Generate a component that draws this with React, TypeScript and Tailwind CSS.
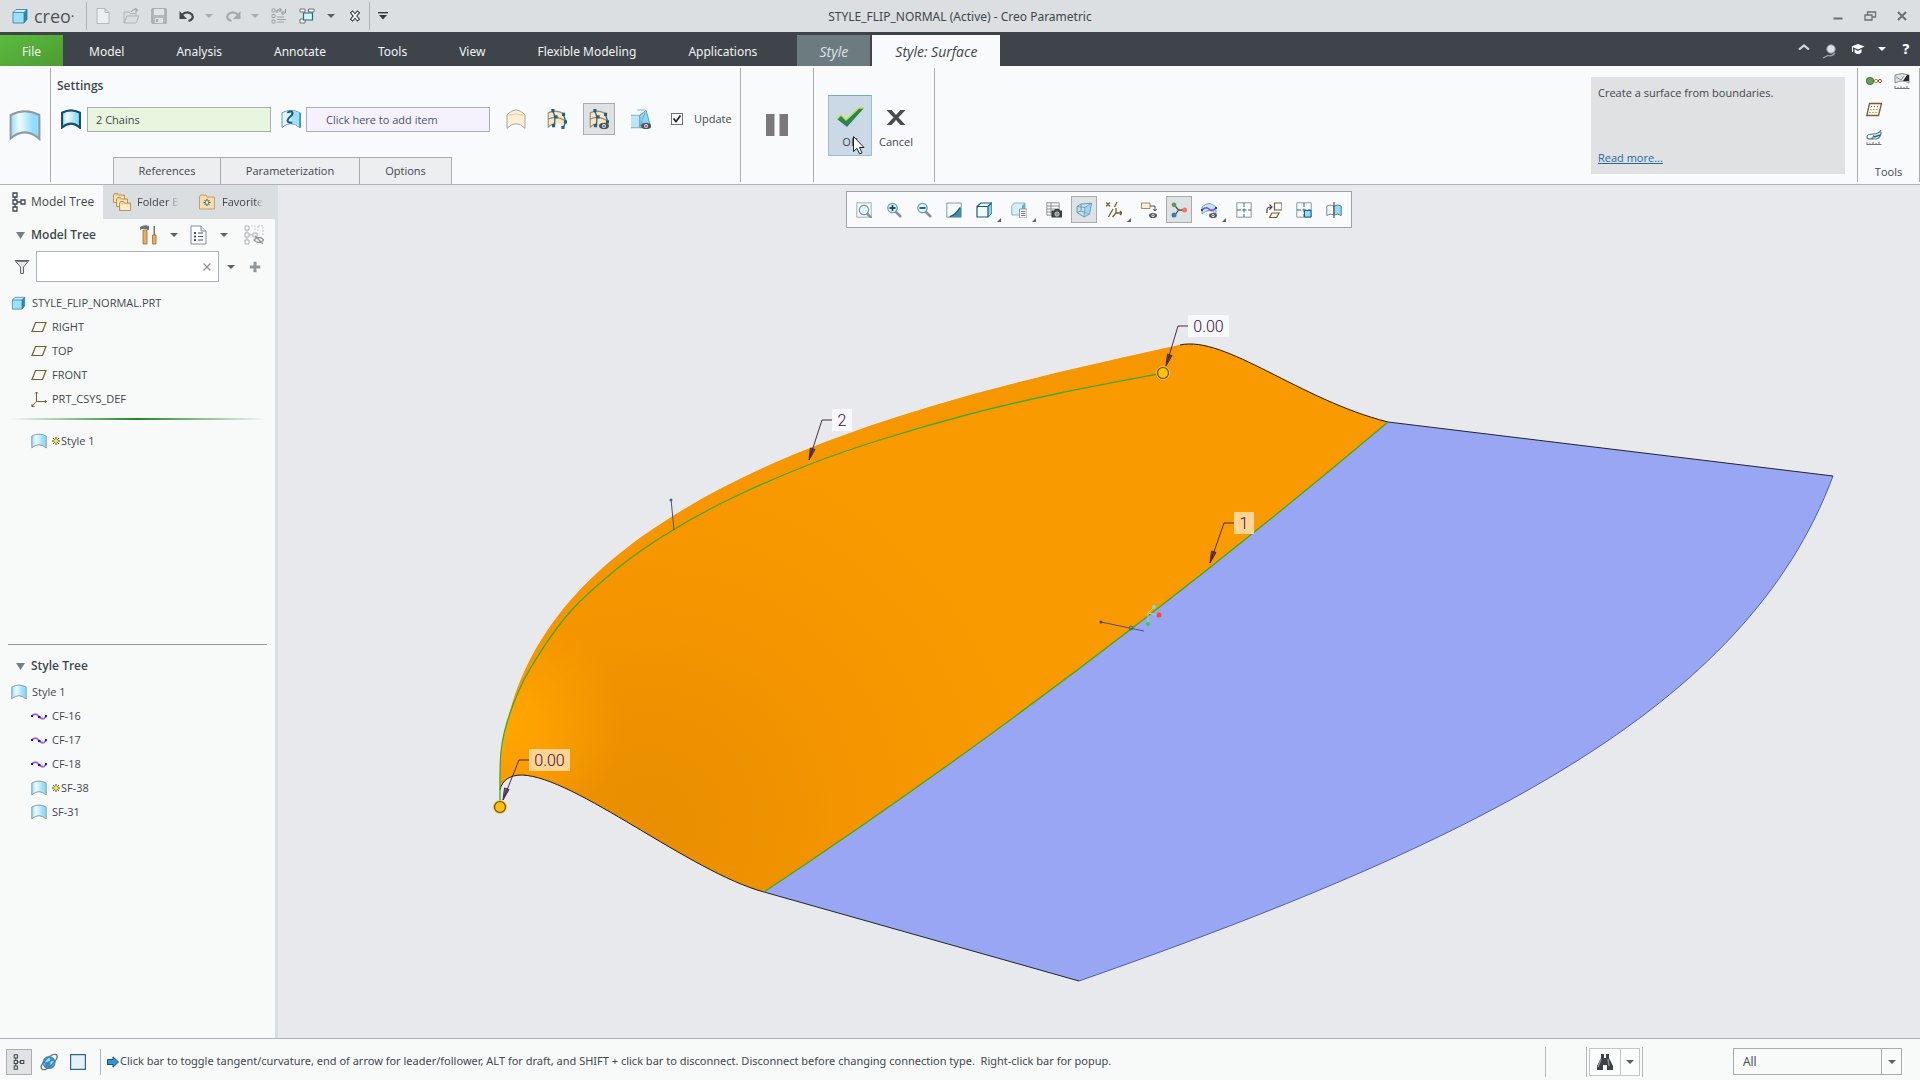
import React from "react";
import clsx from "clsx";

type IconProps = { className?: string };
type Point = [number, number];

const Svg: React.FC<{ box?: string; className?: string; children: React.ReactNode }> = ({
  box = "0 0 16 16",
  className,
  children,
}) => (
  <svg viewBox={box} fill="none" aria-hidden="true" className={clsx("shrink-0", className)}>
    {children}
  </svg>
);

const Caret: React.FC<IconProps> = ({ className = "text-[#5b6063]" }) => (
  <Svg box="0 0 8 4" className={clsx("h-1 w-2", className)}>
    <path d="M0 0h8L4 4z" fill="currentColor" />
  </Svg>
);

const CubeIcon: React.FC<IconProps> = ({ className }) => (
  <Svg className={className}>
    <path d="M1 4.5 4 1.5h11v10L12 15H1z" fill="#c8efff" />
    <path d="M1 4.5h11V15H1z" fill="#9be1ff" />
    <path d="M12 4.5l3-3v10L12 15z" fill="#2f86b5" />
    <path d="M1 4.5 4 1.5h11v10L12 15H1zM1 4.5h11V15M12 4.5l3-3" stroke="#33789d" strokeWidth=".8" />
  </Svg>
);

const SurfaceIcon: React.FC<IconProps & { stroke?: string; tint?: string; weight?: number }> = ({
  className,
  stroke = "#8d9aa2",
  tint = "#8fdcfc",
  weight = 1,
}) => {
  const id = React.useId();
  return (
    <Svg className={className}>
      <defs>
        <linearGradient id={id}>
          <stop offset="0" stopColor={tint} />
          <stop offset=".3" stopColor="#f0fbff" />
          <stop offset=".8" stopColor={tint} />
        </linearGradient>
      </defs>
      <path
        d="M.8 3Q8-.8 15.2 3v12Q8 8.5.8 14.8z"
        fill={`url(#${id})`}
        stroke={stroke}
        strokeWidth={weight}
      />
    </Svg>
  );
};

const CurveRefIcon: React.FC<IconProps> = ({ className }) => (
  <Svg className={className}>
    <path d="M.8 3Q8-.8 15.2 3v12Q8 8.5.8 14.8z" fill="#e3f6fd" stroke="#6b98ae" strokeWidth=".8" />
    <path d="M9 1.5l6.2 1.5v11.5Q12 12 8 11.5z" fill="#9be1ff" />
    <path d="M5 3c5-3 5 1 2.5 3s-4 5 1.500 5" stroke="#125a82" strokeWidth="1.6" />
    <path d="M15.2 3v12" stroke="#23708f" />
  </Svg>
);

const TanIcon: React.FC<IconProps> = ({ className }) => (
  <Svg className={className}>
    <path d="M.8 4.5Q8-3 15.2 4.500V15.500Q8 8 .8 15.500z" fill="#ffeed3" stroke="#a9a6a2" strokeWidth=".8" />
    <path d="M1 5q7-2 14 0" stroke="#d8c5a7" strokeWidth=".6" />
  </Svg>
);

const Eye = () => (
  <>
    <ellipse cx="12" cy="13.5" rx="4" ry="2.6" fill="#4e5357" />
    <circle cx="12" cy="13.5" r="1.5" fill="#fff" />
    <circle cx="12" cy="13.5" r=".8" fill="#4e5357" />
  </>
);

const BlendIcon: React.FC<IconProps & { eye?: boolean }> = ({ className, eye }) => (
  <Svg className={className}>
    <path d="M1 3Q7 0 14 4v10q-6-5-13 0z" fill="#ffe5bd" />
    <path d="M1 3v12M1 3Q7 0 14 4M1 8q6-3 13 1M1 14.5q3-3 6-2.500" stroke="#918c84" strokeWidth=".9" />
    <path d="M4.5 1.5q3 5 1 12M13 4l2 6-2 5" stroke="#17648c" strokeWidth="1" />
    <path
      d="M3.5 0h2.500v2.500H3.500zM6 5h2.500v2.500H6zM4 12h2.500v2.500H4zM12 3h2.500v2.500H12zM13.500 9H16v2.500h-2.500zM11.500 13.500H14V16h-2.500z"
      fill="#17648c"
    />
    {eye && <Eye />}
  </Svg>
);

const PreviewIcon: React.FC<IconProps> = ({ className }) => (
  <Svg className={className}>
    <path d="M0 5h7v10H0z" fill="#bfe3f4" />
    <path d="M7 5l5-4 4 14H7z" fill="#8fd4f3" stroke="#4e9fc4" strokeWidth=".7" />
    <path d="M0 5h7v10H0M5 .8h6M7 15l4-12" stroke="#6fa7c3" strokeWidth=".7" />
    <Eye />
  </Svg>
);

const TreeIcon: React.FC<IconProps> = ({ className }) => (
  <Svg box="0 0 14 20" className={className}>
    <path
      d="M1 1h4v4H1zM1 8h4v4H1zM1 15h4v4H1zM9 8h4v4H9zM3 5v3M3 12v3M5 10h4"
      stroke="currentColor"
      strokeWidth="1.3"
    />
  </Svg>
);

const FolderShape: React.FC<{ x: number; y: number }> = ({ x, y }) => (
  <g transform={`translate(${x} ${y})`}>
    <path d="M.5 2V9.500h11V2H5.500L4.500.5h-3z" fill="#f9cf8c" stroke="#a8834a" strokeWidth=".8" />
    <path d="M1.500 3.500h9.500v5.500H1.500z" fill="#ffeccb" />
  </g>
);

const FoldersIcon: React.FC<IconProps> = ({ className }) => (
  <Svg box="0 0 18 18" className={className}>
    <FolderShape x={0} y={0} />
    <FolderShape x={3} y={4} />
    <FolderShape x={6} y={8} />
  </Svg>
);

const FavoritesIcon: React.FC<IconProps> = ({ className }) => (
  <Svg className={className}>
    <path d="M.5 3v12h15V3H8L7 1H1.500z" fill="#fbdca8" stroke="#b39361" strokeWidth=".8" />
    <path d="M8 5v7M4.500 8.500h7M5.500 6l5 5M10.500 6l-5 5" stroke="#175a77" strokeWidth="1" />
    <circle cx="8" cy="8.5" r="1.2" fill="#fff" />
  </Svg>
);

const ToolsIcon: React.FC<IconProps> = ({ className }) => (
  <Svg box="0 0 17 20" className={className}>
    <path d="M0 2q4-3 9-1v4H7V4H2L0 5z" fill="#69747a" />
    <path d="M3 5h4v14H3z" fill="#e9ae62" stroke="#8d5c25" strokeWidth=".7" />
    <path d="M13.500 1h1.500v9h-1.500z" fill="#6c777d" />
    <path d="M12.500 10H16v9h-3.500z" fill="#e9ae62" stroke="#8d5c25" strokeWidth=".7" />
  </Svg>
);

const PageListIcon: React.FC<IconProps> = ({ className }) => (
  <Svg box="0 0 17 20" className={className}>
    <path d="M1 1h10l5 5v13H1z" fill="#fbfcfd" stroke="#82909a" />
    <path d="M11 1v5h5" fill="#dfe5e9" stroke="#82909a" />
    <path d="M4 8h2M4 11.500h2M4 15h2" stroke="#4b545a" strokeWidth="2" />
    <path d="M8 8h5M8 11.500h5M8 15h5" stroke="#4b545a" />
  </Svg>
);

const HiddenTreeIcon: React.FC<IconProps> = ({ className }) => (
  <Svg box="0 0 20 20" className={className}>
    <path d="M1 1h4v4H1zM1 8h4v4H1zM1 15h4v4H1zM9 8h4v4H9zM3 5v3M3 12v3M5 10h4" stroke="#aeb3b6" />
    <path d="M7 1h4v5M14 1h5v10M14 1v6" stroke="#c9cdcf" strokeDasharray="2 1" />
    <path d="M10 15q5-5 10 0-5 5-10 0zM11 11l8 8" stroke="#8f9598" strokeWidth="1.2" />
  </Svg>
);

const FunnelIcon: React.FC<IconProps> = ({ className }) => (
  <Svg className={className}>
    <path d="M1 1.500h14L9.500 8v6.500H6.500V8z" fill="#e3e5e6" stroke="#62676a" />
    <path d="M2.500 2.200h11" stroke="#4b5053" />
  </Svg>
);

const DatumIcon: React.FC<IconProps> = ({ className }) => (
  <Svg className={className}>
    <path d="M4.500 3.500H15L11.500 12.500H1z" stroke="#7b5d2c" strokeWidth="1.2" />
  </Svg>
);

const CsysIcon: React.FC<IconProps> = ({ className }) => (
  <Svg className={className}>
    <path
      d="M5.500 1v9.500H15.500M5.500 10.500L.8 15.500M4 2.500L5.500 1 7 2.500M14 9l1.500 1.500L14 12M1 13v2.500h2.500"
      stroke="#7b5d2c"
    />
  </Svg>
);

const CurveIcon: React.FC<IconProps> = ({ className }) => (
  <Svg className={className}>
    <path d="M1 8q3.500-4 7 .5t7 0" stroke="#a95bc9" strokeWidth="1.8" />
    <path d="M0 7h2v2H0zM7 8h2.500v2H7zM14 7h2v2h-2z" fill="#1a14c8" />
  </Svg>
);

const StarIcon: React.FC<IconProps> = ({ className }) => (
  <Svg box="0 0 8 8" className={className}>
    <path d="M4 0v8M0 4h8M1 1l6 6M7 1L1 7" stroke="#3d3912" strokeWidth="1" />
    <circle cx="4" cy="4" r="2" fill="#ffe92a" />
  </Svg>
);

const Magnifier: React.FC<{ sign?: string }> = ({ sign }) => (
  <>
    <path d="M9.500 9.500l5.500 5.500" stroke="#8d8f91" strokeWidth="2.5" />
    <circle cx="6.5" cy="6" r="4.7" fill="#e6f5fb" stroke="#6398b0" strokeWidth="1.2" />
    {sign && <path d={sign} stroke="#0f5579" strokeWidth="1.8" />}
  </>
);

const Grid4: React.FC<{ filled?: boolean }> = ({ filled }) => (
  <>
    <path d="M.8.8h14.400v14.400H.8z" fill="#fbfdfe" stroke="#8c969c" />
    <path d="M8 1v14M1 8h14" stroke="#1c7099" strokeDasharray="4 1.5" />
    {filled && <path d="M8.500 8.500h6.500v6.500H8.500z" fill="#8fdcfc" stroke="#1c6085" />}
  </>
);

type Tool = { name: string; active?: boolean; more?: boolean; art: React.ReactNode };

const viewTools: Tool[] = [
  {
    name: "Refit",
    art: (
      <>
        <path d="M.8.8h14.400v14.400H.8z" stroke="#a6adb1" />
        <g transform="translate(1.5 2)">
          <Magnifier />
        </g>
      </>
    ),
  },
  { name: "Zoom In", art: <Magnifier sign="M3.500 6h6M6.500 3v6" /> },
  { name: "Zoom Out", art: <Magnifier sign="M3.500 6h6" /> },
  {
    name: "Repaint",
    art: (
      <>
        <path d="M.8 1h14.400v14.200H.8z" fill="#f7fbfd" stroke="#8c979d" />
        <path d="M2 15q7-2 13-10v10z" fill="#3f8db4" />
        <path d="M4 14.500q6-2 10-9" stroke="#14567a" strokeWidth="1.3" />
      </>
    ),
  },
  {
    name: "Display Style",
    more: true,
    art: (
      <>
        <path d="M1 4.500 5 1h10.500v10L12 15H1z" fill="#f3fafd" stroke="#155a80" strokeWidth="1.2" />
        <path d="M12 4.500L15.500 1v10L12 15z" fill="#8bd2f2" />
        <path d="M1 4.500h11V15M12 4.500L15.500 1" stroke="#155a80" strokeWidth="1.2" />
      </>
    ),
  },
  {
    name: "Saved Orientations",
    more: true,
    art: (
      <>
        <path d="M.8 3.500L3.500 1H14v9l-3 3H.8z" fill="#d3f0fc" stroke="#8fb4c5" />
        <path d="M11 3.500L14 1v6h-3z" fill="#5eb2da" />
        <path d="M8.500 7H16v9H8.500z" fill="#fafafa" stroke="#7e878c" strokeWidth=".8" />
        <path d="M10 9.500h4.500M10 11.500h4.500M10 13.500h4.500" stroke="#545d62" strokeWidth=".8" />
      </>
    ),
  },
  {
    name: "View Manager",
    art: (
      <>
        <path d="M.8.8h12.400v12.400H.8zM5 1v12M1 4h12M1 7h12M1 10h12" stroke="#81898d" strokeWidth=".9" />
        <path d="M5.500 8.500h2.500l1-1.500h4l1 1.500h2v7H5.500z" fill="#3b4043" />
        <circle cx="11" cy="12" r="2.2" fill="#888f93" stroke="#e2e4e5" strokeWidth=".7" />
      </>
    ),
  },
  {
    name: "Perspective View",
    active: true,
    art: (
      <>
        <path d="M1 4.500L5 2l10.500-.8-2 11L8 15 1 10.500z" fill="#c3dfec" stroke="#4b8aab" strokeWidth=".8" />
        <path d="M1 4.500l8 1L15.500 1.200M9 5.500L8 15M5 2v7l8.500 3M1 10.500L5 9" stroke="#5893b1" strokeWidth=".8" />
        <path d="M9 5.500L15.500 1.200l-2 11L8 15z" fill="#8cc6e0" opacity=".5" />
      </>
    ),
  },
  {
    name: "Datum Display",
    more: true,
    art: (
      <path
        d="M0 .5l4 4M4 .5l-4 4M11 0L8.500 5M7 7L2.500 15M10 6v5h6M10 11l-3.500 4M14 9l2 2-2 2"
        stroke="#7b5d2c"
        strokeWidth="1.3"
      />
    ),
  },
  {
    name: "Annotation Display",
    art: (
      <>
        <path d="M.5 1h8.500v5.500H.5z" fill="#ffeed3" stroke="#87704a" strokeWidth=".8" />
        <path d="M9 4h5v5M12 7l2 2 2-2" stroke="#4c5256" />
        <Eye />
      </>
    ),
  },
  {
    name: "Spin Center",
    active: true,
    art: (
      <>
        <path d="M3 2.500L7.500 8 4 13M7.500 8H14" stroke="#47535a" strokeWidth="1.3" />
        <circle cx="3" cy="2.8" r="2.4" fill="#5f9e57" />
        <circle cx="13.5" cy="8" r="2.5" fill="#ef7568" />
        <circle cx="3" cy="13" r="2.5" fill="#357fb0" />
      </>
    ),
  },
  {
    name: "Style Display",
    more: true,
    art: (
      <>
        <path d="M1 5Q8-2 15 5v7Q8 5 1 12z" fill="#bfe9fa" stroke="#5a8ca4" strokeWidth=".8" />
        <path d="M1 8q4-4 7-1t7-1" stroke="#8c3dbb" strokeWidth="1.5" />
        <path d="M0 7h2v2H0zM14 5h2v2h-2z" fill="#1b3fc2" />
        <Eye />
      </>
    ),
  },
  { name: "Show All Views", art: <Grid4 /> },
  {
    name: "Active Plane Orientation",
    art: (
      <>
        <path d="M8.500 1H16v7H8.500zM6 11h7l-2.500 4.500H3.500z" stroke="#7b5d2c" strokeWidth="1.2" />
        <path d="M1 11V8q0-3 4.500-3M3.500 2.500L6 5 3.500 7.500" stroke="#3f474c" strokeWidth="1.2" />
      </>
    ),
  },
  { name: "Next View", art: <Grid4 filled /> },
  {
    name: "Toggle Symmetry",
    art: (
      <>
        <path d="M.8 4Q3.500 2 8 4v9q-4-2-7.200.5z" fill="#f3f8fa" stroke="#6d8c9b" />
        <path d="M8 4q4-2 7.200 0v9.500Q12 11 8 13z" fill="#8fdcfc" stroke="#43829f" />
        <path d="M8 0v16" stroke="#7b5d2c" strokeWidth="1.3" />
      </>
    ),
  },
];

const quickAccess: Tool[] = [
  {
    name: "New",
    art: <path d="M2 .5h8l4 4v11H2zM10 .5v4h4" fill="#eceeef" stroke="#b4b8ba" />,
  },
  {
    name: "Open",
    art: (
      <>
        <path d="M1 15V4h5l1 1.500h6V8M1 15l3-7h12l-3 7z" fill="#dadddf" stroke="#b0b4b6" />
        <path d="M8 4q2-3.500 6-2M12 0l2.500 2-2 2.500" stroke="#a6aaac" strokeWidth="1.3" />
      </>
    ),
  },
  {
    name: "Save",
    art: (
      <>
        <path d="M.8.8h14.400v14.400H.8z" fill="#b3b7b9" stroke="#9fa3a6" />
        <path d="M3 1h10v6H3z" fill="#e1e4e5" />
        <path d="M4 10h8v5H4z" fill="#dfe1e2" />
        <path d="M5 11h2v3H5z" fill="#a4a8ab" />
      </>
    ),
  },
];

const MenuCaret: React.FC<{ label: string; className?: string; faded?: boolean }> = ({ label, className, faded }) => (
  <button type="button" aria-label={label} className={clsx("flex items-center justify-center", className)}>
    <Caret className={faded ? "text-[#a9adb0]" : "text-[#5b6063]"} />
  </button>
);

const TitleBar = () => (
  <header className="grid h-8 shrink-0 grid-cols-[1fr_auto_1fr] items-center bg-[#dbdfe1]">
    <div className="flex items-center">
      <CubeIcon className="ml-3 h-4 w-4" />
      <span className="ml-1.5 w-[52px] text-[18px] leading-5 text-[#4f5457]">
        creo<sup className="text-[8px]">•</sup>
      </span>
      <span className="h-7 w-px bg-[#b0b4b6]" />
      <div className="ml-2 flex items-center gap-3">
        {quickAccess.map((item) => (
          <button type="button" key={item.name} aria-label={item.name}>
            <Svg className="h-4 w-4">{item.art}</Svg>
          </button>
        ))}
        <button type="button" aria-label="Undo">
          <Svg className="h-4 w-4">
            <path d="M2.500 7q6-5 10.500-.5 2.500 4.500-3.500 6.500" stroke="#41474b" strokeWidth="2.2" />
            <path d="M.5 3v8h7.500z" fill="#41474b" />
          </Svg>
        </button>
      </div>
      <MenuCaret label="Undo list" faded className="w-6 pl-1" />
      <button type="button" aria-label="Redo" className="ml-1.5">
        <Svg className="h-4 w-4">
          <path d="M13.500 7Q7.500 2 3 6.500.5 11 6.500 13" stroke="#a5a9ab" strokeWidth="2.2" />
          <path d="M15.500 3v8H8z" fill="#a5a9ab" />
        </Svg>
      </button>
      <MenuCaret label="Redo list" faded className="w-7" />
      <button type="button" aria-label="Regenerate" className="ml-0.5">
        <Svg className="h-4 w-4">
          <path d="M1 1h3v3H1zM1 6.500h3v3H1zM1 12h3v3H1zM6 9h7M6 11.500h9M6 14h7" stroke="#9ea2a4" />
          <path d="M6 5V2h4M8.500 0l2 2-2 2M14.500 1v4H11M12.500 3l-2 2 2 2" stroke="#898d90" />
        </Svg>
      </button>
      <button type="button" aria-label="Windows" className="ml-3">
        <Svg className="h-4 w-4">
          <path d="M1 1h5v3H1zM9.500 1H15v3H9.500zM1 11h5v4H1z" fill="#fff" stroke="#6d7478" />
          <path d="M4.500 5h9v7h-9z" fill="#d9f2fc" stroke="#1d6a92" strokeWidth="1.2" />
        </Svg>
      </button>
      <MenuCaret label="Window list" className="w-6 pl-2" />
      <button type="button" aria-label="Close window" className="ml-2">
        <Svg className="h-3 w-4">
          <path d="M3 2l10 12M13 2L3 14" stroke="#34393c" strokeWidth="5" />
          <path d="M4 3l8 10M12 3L4 13" stroke="#fff" strokeWidth="2.6" />
        </Svg>
      </button>
      <span className="ml-1.5 h-7 w-px bg-[#b0b4b6]" />
      <button type="button" aria-label="Customize toolbar" className="ml-2">
        <Svg box="0 0 10 8" className="h-2 w-2.5">
          <path d="M0 .7h10" stroke="#34393c" strokeWidth="1.4" />
          <path d="M1 3h8L5 7.500z" fill="#34393c" />
        </Svg>
      </button>
    </div>
    <h1 className="pt-px font-['Noto_Sans'] text-[12px] leading-4">STYLE_FLIP_NORMAL (Active) - Creo Parametric</h1>
    <div className="flex items-center justify-end gap-4 pr-2.5 text-[#6b6f72]">
      <button type="button" aria-label="Minimize">
        <Svg className="h-4 w-4">
          <path d="M3.500 10.500h9" stroke="currentColor" strokeWidth="2" />
        </Svg>
      </button>
      <button type="button" aria-label="Restore">
        <Svg className="h-4 w-4">
          <path d="M3 7h7v5H3zM5.500 7V4h8v5H10" stroke="currentColor" strokeWidth="1.3" />
        </Svg>
      </button>
      <button type="button" aria-label="Close">
        <Svg className="h-4 w-4">
          <path d="M4 4l8 8M12 4l-8 8" stroke="currentColor" strokeWidth="2" />
        </Svg>
      </button>
    </div>
  </header>
);

const ribbonTabs = ["Model", "Analysis", "Annotate", "Tools", "View", "Flexible Modeling", "Applications"];

const RibbonTabs = () => (
  <nav className="flex h-[34px] shrink-0 items-stretch bg-[#3e444a] pt-[3px] font-['Noto_Sans'] text-[12px] text-[#f1f3f4]">
    <button type="button" className="w-[63px] bg-linear-to-br from-[#5cbb3e] to-[#4c9c34] pt-0.5">
      File
    </button>
    <div className="flex">
      {ribbonTabs.map((tab) => (
        <button type="button" key={tab} className="px-[26px] pt-0.5">
          {tab}
        </button>
      ))}
    </div>
    <button
      type="button"
      className="ml-3.5 w-[73px] bg-[#6b7b80] pt-0.5 font-['Open_Sans'] text-[14px] text-[#dfe4e6] italic"
    >
      Style
    </button>
    <button
      type="button"
      className="ml-0.5 w-32 bg-[#f8fafc] pt-0.5 font-['Open_Sans'] text-[14px] text-[#3e444a] italic"
    >
      Style: Surface
    </button>
    <div className="ml-auto flex items-center gap-3 pr-1.5">
      <button type="button" aria-label="Minimize ribbon">
        <Svg box="0 0 12 6" className="mb-2 h-1.5 w-3">
          <path d="M1 5.500l5-4 5 4" stroke="#d5d8da" strokeWidth="2.2" />
        </Svg>
      </button>
      <button type="button" aria-label="Search commands">
        <Svg className="h-4 w-4">
          <circle cx="9" cy="6" r="4.3" fill="#d9e1e6" stroke="#83898d" />
          <path d="M13 10q-3 4-7 2.500L1 15" stroke="#9ea3a6" strokeWidth="1.3" />
        </Svg>
      </button>
      <button type="button" aria-label="Learning center">
        <Svg className="mb-1 h-4 w-4">
          <path d="M8 3l6.500 2.500L8 8.500 1.500 5.500z" fill="#fff" />
          <path d="M4.500 8v3.500q3.500 3 7 0V8L8 10z" fill="#fff" />
          <path d="M2.500 6v5" stroke="#fff" />
        </Svg>
      </button>
      <button type="button" aria-label="Help options">
        <Caret className="mb-1 text-white" />
      </button>
      <button type="button" aria-label="Help" className="mb-1 w-4 text-[14px] leading-5 font-extrabold text-white">
        ?
      </button>
    </div>
  </nav>
);

const Divider = () => <span className="mt-0.5 mb-0.5 w-px shrink-0 bg-[#a9adb0]" />;

const ribbonPanels = [
  { name: "References", width: "w-[108px]" },
  { name: "Parameterization", width: "w-[140px]" },
  { name: "Options", width: "w-[93px]" },
];

const Ribbon = () => (
  <section className="flex h-[119px] shrink-0 items-stretch border-b border-[#a9b5ba] bg-[#f8fafc]">
    <div className="flex w-[50px] items-center justify-center px-1">
      <SurfaceIcon className="h-8 w-9" />
    </div>
    <Divider />
    <div className="flex w-[689px] flex-col pl-1.5">
      <h2 className="mt-3 text-[12px] leading-4 font-semibold">Settings</h2>
      <div className="mt-[9px] flex h-8 items-center">
        <SurfaceIcon className="ml-1 h-5 w-5" stroke="#164f70" weight={1.8} />
        <input
          aria-label="Boundary chains"
          defaultValue="2 Chains"
          className="ml-1.5 h-[25px] w-[184px] border border-[#a9adaf] bg-[#e9f6df] px-2 outline-none"
        />
        <CurveRefIcon className="ml-2.5 h-5 w-5" />
        <input
          aria-label="Internal curves"
          defaultValue="Click here to add item"
          className="ml-[5px] h-[25px] w-[184px] border border-[#a9adaf] bg-[#f5f2fd] pl-[19px] text-[#4b5266] outline-none"
        />
        <button type="button" aria-label="Radial" className="ml-4">
          <TanIcon className="h-5 w-5" />
        </button>
        <button type="button" aria-label="Blend" className="ml-[21px]">
          <BlendIcon className="h-5 w-5" />
        </button>
        <button
          type="button"
          aria-label="Show dragger"
          className="ml-4 flex h-8 w-8 items-center justify-center border border-[#aaaeb0] bg-[#dfe1e3]"
        >
          <BlendIcon eye className="h-5 w-5" />
        </button>
        <button type="button" aria-label="Show preview" className="ml-4">
          <PreviewIcon className="h-5 w-5" />
        </button>
        <label className="ml-5 flex items-center gap-[11px]">
          <span className="relative flex h-3 w-3">
            <input
              type="checkbox"
              defaultChecked
              className="h-3 w-3 appearance-none border border-[#6f7477] bg-white"
            />
            <Svg box="0 0 12 12" className="pointer-events-none absolute inset-0 h-3 w-3">
              <path d="M2.500 5.500L5 8.500l4.500-6" stroke="#25292b" strokeWidth="1.8" />
            </Svg>
          </span>
          Update
        </label>
      </div>
      <div className="mt-auto ml-14 flex h-[27px]">
        {ribbonPanels.map((panel) => (
          <button
            type="button"
            key={panel.name}
            className={clsx("-mr-px border border-b-0 border-[#a9adaf] bg-[#edeef0]", panel.width)}
          >
            {panel.name}
          </button>
        ))}
      </div>
    </div>
    <Divider />
    <button type="button" aria-label="Pause" className="flex w-[72px] items-center justify-center">
      <Svg box="0 0 22 22" className="h-[22px] w-[22px]">
        <path d="M0 0h8.500v22H0zM13.500 0H22v22h-8.500z" fill="#7a787b" />
      </Svg>
    </button>
    <Divider />
    <div className="flex w-[120px] items-center pl-3.5">
      <button
        type="button"
        className="relative flex h-[61px] w-11 flex-col items-center gap-1 border border-[#94c0de] border-t-[#7da9b8] bg-[#cad9e5] pt-2.5 leading-5"
      >
        <Svg box="0 0 28 22" className="h-[22px] w-7">
          <path d="M1 13l4-4 5 5L23 2h5L11 21z" fill="#2a8456" />
          <path d="M1 13l4-4 5 5L23 2h5" stroke="#c3e13a" strokeWidth="1.4" />
        </Svg>
        OK
        <Svg box="0 0 12 19" className="absolute top-10 left-6 h-[19px] w-3">
          <path d="M.5.5v15l3.500-3.200 2.500 5.700 2.500-1.200-2.500-5.300H11z" fill="#fff" stroke="#202224" />
        </Svg>
      </button>
      <button type="button" className="flex h-[61px] w-12 flex-col items-center gap-1 pt-[11px] leading-5">
        <Svg box="0 0 22 22" className="h-[22px] w-[22px]">
          <path d="M1.500 4h5l4.500 5 4.500-5h5l-7 7.500 7 7.500h-5L11 14l-4.500 5h-5l7-7.500z" fill="#474b4e" />
        </Svg>
        Cancel
      </button>
    </div>
    <Divider />
    <aside className="my-[11px] mr-3 ml-auto flex h-[97px] w-[254px] flex-col justify-between bg-[#e0e1e3] px-[7px] py-2 leading-4">
      <p>Create a surface from boundaries.</p>
      <a href="#help" className="text-[#1f68a0] underline">
        Read more...
      </a>
    </aside>
    <Divider />
    <div className="flex w-[61px] flex-col">
      <div className="mt-[7px] ml-2 grid w-11 grid-cols-2 gap-3">
        <button type="button" aria-label="Connection analysis">
          <Svg className="h-4 w-4">
            <path d="M7 8h8" stroke="#b88a34" strokeWidth="2" />
            <circle cx="4" cy="8" r="3.7" fill="#5fa453" stroke="#366b2e" strokeWidth=".8" />
            <circle cx="10" cy="8" r="1.7" fill="#fff" stroke="#b98b2e" />
            <circle cx="14" cy="8" r="1.6" fill="#fff" stroke="#b34532" />
          </Svg>
        </button>
        <button type="button" aria-label="Reflection">
          <Svg className="h-4 w-4">
            <path d="M1 2q7-3 14 0v8q-7-4-14 0z" fill="#dfe3e5" stroke="#6f777c" strokeWidth=".8" />
            <path d="M9 8l4-6h2v6z" fill="#25292c" />
            <path d="M2 4l5 3 3-4" stroke="#8d959a" />
            <path d="M.5 15.500h15M1 13v2M4 14v1M7 13v2M10 14v1M13 13v2" stroke="#6f777c" />
          </Svg>
        </button>
        <button type="button" aria-label="Mesh">
          <Svg className="h-4 w-4">
            <path d="M3.500 2.500h12l-3 12H.8z" fill="#fffaf0" stroke="#7b5d2c" strokeWidth="1.3" />
            <path d="M5 5.500h9M4.500 8.500h8.500M3.500 11.500h8.500" stroke="#6b5737" strokeDasharray="1 2" />
          </Svg>
        </button>
        <span />
        <button type="button" aria-label="Curvature">
          <Svg className="h-4 w-4">
            <path d="M1 8q0-3 6-3t8-4M3 10h7q5-1 5-7M1 8q0 2 3 2t4-4" stroke="#5d7481" strokeWidth="1.2" />
            <path d="M8 8l6-2" stroke="#1a6a94" strokeWidth="1.5" />
            <path d="M.5 15.500h15M1 13v2M4 14v1M7 13v2M10 14v1M13 13v2" stroke="#6f777c" />
          </Svg>
        </button>
      </div>
      <button type="button" className="mt-auto mb-1 text-[11px] leading-4">
        Tools
      </button>
    </div>
    <Divider />
  </section>
);

type TreeItem = { label: string; icon: React.FC<IconProps>; root?: boolean; changed?: boolean };

const modelItems: TreeItem[] = [
  { label: "STYLE_FLIP_NORMAL.PRT", icon: CubeIcon, root: true },
  { label: "RIGHT", icon: DatumIcon },
  { label: "TOP", icon: DatumIcon },
  { label: "FRONT", icon: DatumIcon },
  { label: "PRT_CSYS_DEF", icon: CsysIcon },
];

const styleItems: TreeItem[] = [
  { label: "Style 1", icon: SurfaceIcon, root: true },
  { label: "CF-16", icon: CurveIcon },
  { label: "CF-17", icon: CurveIcon },
  { label: "CF-18", icon: CurveIcon },
  { label: "SF-38", icon: SurfaceIcon, changed: true },
  { label: "SF-31", icon: SurfaceIcon },
];

const TreeRow: React.FC<{ item: TreeItem }> = ({ item }) => {
  const Icon = item.icon;
  return (
    <li className={clsx("flex h-6 items-center", item.root ? "pl-[11px]" : "pl-[31px]")}>
      <Icon className={item.icon === CubeIcon ? "mr-1.5 h-3.5 w-[15px]" : "mr-[5px] h-4 w-4"} />
      {item.changed && <StarIcon className="mr-px h-2 w-2" />}
      <span className="text-[11px]">{item.label}</span>
    </li>
  );
};

const PanelTitle: React.FC<{ title: string; className?: string }> = ({ title, className }) => (
  <h2 className={clsx("flex items-center gap-1.5 text-[12px] font-semibold", className)}>
    <Svg box="0 0 9 7" className="h-[7px] w-[9px]">
      <path d="M0 0h9L4.500 7z" fill="#7a7f82" />
    </Svg>
    {title}
  </h2>
);

const SidePanel = () => (
  <aside className="flex w-[278px] shrink-0 flex-col border-r-[3px] border-[#d8dfe2] bg-[#f8fafa]">
    <div className="flex h-[34px] shrink-0 bg-[#dadee1]">
      <button
        type="button"
        className="flex w-[103px] items-center gap-[5px] bg-[#f8fafa] pl-3 text-[12px] whitespace-nowrap"
      >
        <TreeIcon className="h-5 w-3.5 text-[#3f474c]" />
        Model Tree
      </button>
      <button type="button" className="flex w-[86px] items-center gap-1.5 pl-2.5 text-[11px]">
        <FoldersIcon className="h-[18px] w-[18px]" />
        <span className="mask-r-from-70% whitespace-nowrap">Folder B</span>
      </button>
      <button type="button" className="flex w-[86px] items-center gap-[7px] pl-2.5 text-[11px]">
        <FavoritesIcon className="h-4 w-4" />
        <span className="mask-r-from-80% whitespace-nowrap">Favorite</span>
      </button>
    </div>
    <div className="flex h-8 shrink-0 items-center">
      <PanelTitle title="Model Tree" className="w-[140px] pl-4" />
      <button type="button" aria-label="Tree settings">
        <ToolsIcon className="h-5 w-[17px]" />
      </button>
      <MenuCaret label="Settings menu" className="w-[33px]" />
      <button type="button" aria-label="Show">
        <PageListIcon className="h-5 w-[17px]" />
      </button>
      <MenuCaret label="Show menu" className="w-[33px]" />
      <button type="button" aria-label="Tree filters" className="ml-1">
        <HiddenTreeIcon className="h-5 w-5" />
      </button>
    </div>
    <div className="flex h-[31px] shrink-0 items-center pl-3.5">
      <FunnelIcon className="h-4 w-4" />
      <div className="relative ml-1.5 h-[31px] w-[183px]">
        <input aria-label="Filter tree" className="h-full w-full border border-[#a9b3b7] bg-white px-2 outline-none" />
        <button type="button" aria-label="Clear filter" className="absolute top-2 right-1 h-4 w-4">
          <Svg className="h-4 w-4">
            <path d="M4.500 4.500l7 7M11.500 4.500l-7 7" stroke="#8a8f92" strokeWidth="1.3" />
          </Svg>
        </button>
      </div>
      <MenuCaret label="Filter history" className="w-[23px]" />
      <button type="button" aria-label="Add filter" className="ml-[7px]">
        <Svg className="h-3 w-3">
          <path d="M8 1v14M1 8h14" stroke="#909598" strokeWidth="4" />
        </Svg>
      </button>
    </div>
    <ul className="mt-[9px]">
      {modelItems.map((item) => (
        <TreeRow key={item.label} item={item} />
      ))}
    </ul>
    <hr className="mx-2 mt-[7px] h-0.5 border-0 bg-linear-to-r from-transparent via-[#1d8a1f] to-transparent" />
    <ul className="mt-[9px]">
      <TreeRow item={{ label: "Style 1", icon: SurfaceIcon, changed: true }} />
    </ul>
    <hr className="mx-2 mt-[191px] border-[#93999d]" />
    <PanelTitle title="Style Tree" className="mt-[9px] h-6 pl-4" />
    <ul className="mt-0.5">
      {styleItems.map((item) => (
        <TreeRow key={item.label} item={item} />
      ))}
    </ul>
  </aside>
);

// Catmull-Rom spline through the points, returned as bezier segments
const spline = (points: Point[]) =>
  points
    .slice(0, -1)
    .map((p1, i) => {
      const p0 = points[i - 1] ?? p1;
      const p2 = points[i + 1];
      const p3 = points[i + 2] ?? p2;
      const c1 = [p1[0] + (p2[0] - p0[0]) / 6, p1[1] + (p2[1] - p0[1]) / 6];
      const c2 = [p2[0] - (p3[0] - p1[0]) / 6, p2[1] - (p3[1] - p1[1]) / 6];
      return `C${c1.join(" ")} ${c2.join(" ")} ${p2.join(" ")}`;
    })
    .join("");

const innerChain: Point[] = [
  [500, 806], [501, 752], [510, 713], [530, 669], [570, 612], [623, 564], [673, 530], [730, 499],
  [808, 465], [883, 439], [970, 414], [1060, 393], [1163, 373],
];
const silhouette = "C500 650 588 569 673 516C817 426 1014 381 1180 345";
const topEdge = "C1225 335 1300 400 1388 422";
const bottomEdge = "C690 872 575 777 522 775C510 775 502 780 500 790";
const outerEdge = "C1746 711 1470 844 1079 981";
const orangeFace = `M500 790${silhouette}${topEdge}Q1076 685 764 892${bottomEdge}z`;

type Callout = { text: string; x: number; y: number; w: number; tip: Point; onSurface?: boolean };

const callouts: Callout[] = [
  { text: "0.00", x: 1188, y: 315, w: 41, tip: [1166, 366] },
  { text: "2", x: 832, y: 409, w: 20, tip: [809, 460] },
  { text: "1", x: 1234, y: 512, w: 20, tip: [1210, 563], onSurface: true },
  { text: "0.00", x: 529, y: 749, w: 41, tip: [503, 800], onSurface: true },
];

const Model = () => (
  <svg
    viewBox="278 185 1642 853"
    fill="none"
    role="img"
    aria-label="Boundary surface preview"
    className="absolute inset-0 h-full w-full"
  >
    <defs>
      <radialGradient id="shade" gradientUnits="userSpaceOnUse" cx="650" cy="820" r="400">
        <stop offset="0" stopColor="#e88e00" />
        <stop offset=".25" stopColor="#ed9100" />
        <stop offset=".5" stopColor="#f49500" />
        <stop offset="1" stopColor="#f99a00" />
      </radialGradient>
      <radialGradient id="glow" gradientUnits="userSpaceOnUse" cx="512" cy="725" r="110">
        <stop offset="0" stopColor="#ffa600" />
        <stop offset=".3" stopColor="#ffa400" stopOpacity=".8" />
        <stop offset="1" stopColor="#ff9f00" stopOpacity="0" />
      </radialGradient>
    </defs>
    <path d={`M1388 422L1833 476${outerEdge}L764 892Q1076 685 1388 422z`} fill="#98a6f3" />
    <path d={`M1833 476${outerEdge}`} stroke="#4a63a8" />
    <path d="M1388 422L1833 476M1079 981L764 892" stroke="#20242c" />
    <path d={orangeFace} fill="url(#shade)" />
    <path d={orangeFace} fill="url(#glow)" />
    <path
      d={`M500 790${silhouette}L1163 373${spline([...innerChain].reverse())}z`}
      fill="#f59500"
      opacity=".7"
    />
    <path d={`M1180 345${topEdge}M764 892${bottomEdge}`} stroke="#1d1a14" />
    <path d={`M500 806${spline(innerChain)}M764 892Q1076 685 1388 422`} stroke="#45a81c" strokeWidth="1.3" />
    <path d="M671 499L674 530M1101 622L1144 631" stroke="#5a4a78" />
    <circle cx="671" cy="500" r="1.5" fill="#2b6cae" />
    <circle cx="1101" cy="622" r="1.5" fill="#4a4470" />
    <circle cx="1131" cy="628" r="2" stroke="#31776b" />
    <path d="M1148 613L1154 607M1148 613L1158 615M1148 613V622" stroke="#9fd8c8" />
    <circle cx="1154" cy="607" r="2" fill="#5fe3f2" />
    <circle cx="1159" cy="615" r="2.5" fill="#ff4538" />
    <circle cx="1148" cy="624" r="2" fill="#25dd3a" />
    <g stroke="#4b2b48">
      {[[1163, 373], [500, 807]].map(([cx, cy]) => (
        <g key={cx}>
          <circle cx={cx} cy={cy} r="6.5" stroke="#f5cb27" />
          <circle cx={cx} cy={cy} r="5.5" fill="#ffc107" stroke="#5e4a0c" strokeWidth="1.2" />
        </g>
      ))}
      {callouts.map(({ text, x, y, w, tip, onSurface }) => (
        <g key={`${text}-${x}`}>
          <path d={`M${x} ${y + 11}h-10L${tip[0]} ${tip[1]}`} />
          <path d={`M${tip[0]} ${tip[1]}l1.5-12 4.5 1.500z`} fill="#3f1f52" fillOpacity=".7" />
          <rect x={x} y={y} width={w} height="22" fill={onSurface ? "#ffd495" : "#f7f8fa"} stroke="none" />
          <text
            x={x + w / 2}
            y={y + 17}
            textAnchor="middle"
            stroke="none"
            fill="#35103f"
            className="font-['Roboto'] text-[16px] font-light"
          >
            {text}
          </text>
        </g>
      ))}
    </g>
  </svg>
);

const Viewport = () => (
  <main className="relative flex min-w-0 flex-1 items-start justify-center bg-[#e8e9ed] pt-1.5">
    <Model />
    <div role="toolbar" className="relative flex h-[37px] items-center gap-1 border border-[#a0a3a6] bg-[#f8fafc] px-1">
      {viewTools.map((tool) => (
        <button
          type="button"
          key={tool.name}
          aria-label={tool.name}
          className={clsx("flex h-[27px]", tool.more ? "items-end" : "items-center")}
        >
          <span
            className={clsx(
              "flex h-[27px] w-[26px] items-center justify-center border",
              tool.active ? "border-[#a6abae] bg-[#dfe2e5]" : "border-transparent",
            )}
          >
            <Svg className="h-4 w-4">{tool.art}</Svg>
          </span>
          {tool.more && (
            <Svg box="0 0 5 5" className="h-[5px] w-[5px]">
              <path d="M4 0v4H0z" fill="#5b6063" />
            </Svg>
          )}
        </button>
      ))}
    </div>
  </main>
);

const StatusBar = () => (
  <footer className="flex h-[42px] shrink-0 items-center border-t border-[#a9b5ba] bg-[#f8fafa] pt-1">
    <button
      type="button"
      aria-label="Toggle navigator"
      className="ml-1.5 flex h-[26px] w-[26px] items-center justify-center border border-[#aaaeb0] bg-[#e0e2e3]"
    >
      <TreeIcon className="h-4 w-3 text-[#3f474c]" />
    </button>
    <button type="button" aria-label="Toggle browser" className="ml-2">
      <Svg className="h-[18px] w-[18px]">
        <circle cx="8" cy="8.5" r="5.8" fill="#2f8fd0" />
        <path d="M5 5q3-2 4 0t-3 3-2 3M10 7q3 0 3 2l-3 3q-2-2 0-5" fill="#9ad6f5" />
        <path d="M2 14.500Q-1 12 5 6T14.500 1.500Q17 4 11 10T2 14.500z" stroke="#68757d" strokeWidth="1.2" />
      </Svg>
    </button>
    <button type="button" aria-label="Full screen" className="ml-3">
      <Svg className="h-4 w-4">
        <path d="M.6.6h14.800v14.800H.6z" fill="#e6f0f7" stroke="#2d6a88" strokeWidth="1.2" />
      </Svg>
    </button>
    <span className="ml-3.5 h-[26px] w-px bg-[#b3b7b9]" />
    <Svg box="0 0 12 12" className="ml-1.5 h-3 w-3">
      <path d="M.5 3.500H6V.8L11.500 6 6 11.200V8.500H.5z" fill="#3295cf" stroke="#135379" />
    </Svg>
    <p className="ml-px font-['Noto_Sans'] text-[11px] whitespace-pre">
      Click bar to toggle tangent/curvature, end of arrow for leader/follower, ALT for draft, and SHIFT + click bar to
      disconnect. Disconnect before changing connection type.{"  "}Right-click bar for popup.
    </p>
    <span className="ml-auto h-[30px] w-px bg-[#b3b7b9]" />
    <span className="ml-10 h-[30px] w-px bg-[#b3b7b9]" />
    <div className="mx-0.5 flex h-7 border border-[#c3c6c8] bg-[#fbfcfc]">
      <button type="button" aria-label="Find" className="flex w-[30px] items-center justify-center">
        <Svg className="h-4 w-4">
          <path d="M4 0h3v4h2V0h3v4l4 8v4h-6v-5H6v5H0v-4l4-8z" fill="#3e4245" />
          <path d="M4 5l-3 8M11 5l1 7" stroke="#8c9194" strokeWidth="1.5" />
        </Svg>
      </button>
      <MenuCaret label="Find options" className="w-[19px] border-l border-[#c3c6c8]" />
    </div>
    <span className="h-[30px] w-px bg-[#b3b7b9]" />
    <div className="relative mr-[18px] ml-[90px] flex h-[27px] w-[169px] border border-[#a9adb0]">
      <select aria-label="Selection filter" className="w-full appearance-none bg-[#f8fafa] pl-[9px] text-[12px] outline-none">
        <option>All</option>
      </select>
      <span className="pointer-events-none absolute inset-y-0 right-0 flex w-5 items-center justify-center border-l border-[#a9adb0]">
        <Caret />
      </span>
    </div>
  </footer>
);

const App: React.FC = () => (
  <div className="flex h-screen flex-col overflow-hidden bg-[#f8fafc] font-['Open_Sans','Noto_Sans',sans-serif] text-[11px] text-[#3f474c]">
    <TitleBar />
    <RibbonTabs />
    <Ribbon />
    <div className="flex min-h-0 flex-1">
      <SidePanel />
      <Viewport />
    </div>
    <StatusBar />
  </div>
);

export default App;
